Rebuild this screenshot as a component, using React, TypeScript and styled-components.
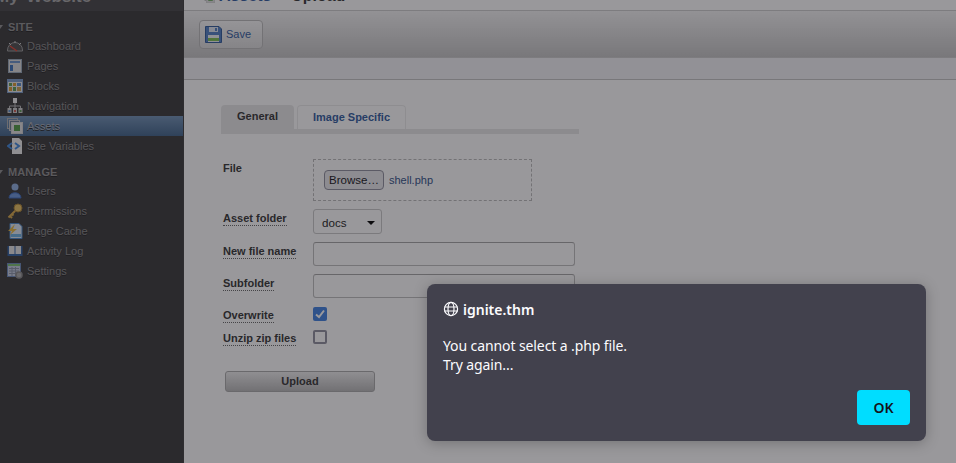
import React from "react"
import styled, { createGlobalStyle } from "styled-components"

const GlobalStyle = createGlobalStyle`
  html, body {
    margin: 0;
    height: 100%;
    overflow: hidden;
    background: #fff;
    font-family: "Liberation Sans", Arial, sans-serif;
  }
  * { box-sizing: border-box; }
`

const DashboardIcon = () => (
  <svg width="16" height="16" viewBox="0 0 16 16">
    <path d="M0.5 12 A7.5 7.5 0 0 1 15.5 12 L15.5 13 L0.5 13 Z" fill="#4c4c4c" stroke="#999" />
    <path d="M2 5 L4 7 M8 3 V5 M14 5 L12 7" stroke="#ccc" />
    <path d="M3 8 L10 13" stroke="#e04030" strokeWidth="1.4" />
  </svg>
)
const PagesIcon = () => (
  <svg width="16" height="16" viewBox="0 0 16 16">
    <rect x="1.5" y="1.5" width="13" height="13" fill="#ddd" stroke="#9ab" />
    <rect x="3" y="3" width="10" height="2" fill="#6a92c8" />
    <rect x="3" y="7" width="3" height="6" fill="#3a6fb8" />
  </svg>
)
const BlocksIcon = () => (
  <svg width="16" height="16" viewBox="0 0 16 16">
    <rect x="0.5" y="1.5" width="15" height="13" fill="#e8e8e8" stroke="#7a9cc8" />
    <rect x="1" y="2" width="14" height="2" fill="#7a9cc8" />
    <rect x="2" y="5" width="3" height="3" fill="#5a9a50" />
    <rect x="6" y="5" width="3" height="3" fill="#d89a30" />
    <rect x="10" y="5" width="4" height="3" fill="#5a8ac8" />
    <rect x="2" y="9" width="3" height="4" fill="#d89a30" />
    <rect x="6" y="9" width="3" height="4" fill="#5a9a50" />
    <rect x="10" y="9" width="4" height="4" fill="#c8a050" />
  </svg>
)
const NavigationIcon = () => (
  <svg width="16" height="16" viewBox="0 0 16 16">
    <rect x="6" y="0" width="4" height="5" fill="#eee" />
    <path d="M8 5 V8 M2.5 10 V8 H13.5 V10 M8 8 V10" stroke="#bbb" fill="none" />
    <rect x="0.5" y="10" width="4" height="5" fill="#ccc" />
    <rect x="6" y="10" width="4" height="5" fill="#ccc" />
    <rect x="11.5" y="10" width="4" height="5" fill="#ccc" />
    <rect x="1.5" y="12" width="2" height="2" fill="#5a8ac8" />
    <rect x="7" y="12" width="2" height="2" fill="#c85a50" />
    <rect x="12.5" y="12" width="2" height="2" fill="#5a9a50" />
  </svg>
)
const AssetsIcon = ({ size = 16 }: { size?: number }) => (
  <svg width={size} height={size} viewBox="0 0 16 16">
    <rect x="0.5" y="0.5" width="10" height="10" fill="none" stroke="#b0b0b0" />
    <rect x="2.5" y="2.5" width="10" height="10" fill="#6a7a8a" stroke="#c0c0c0" />
    <rect x="4.5" y="4.5" width="11" height="11" fill="#e0e0e0" stroke="#d0d0d0" />
    <rect x="7" y="7" width="6" height="6" fill="#4f9a40" />
  </svg>
)
const VariablesIcon = () => (
  <svg width="16" height="16" viewBox="0 0 16 16">
    <path d="M5 0 H12 L15 3 V16 H5 Z" fill="#eee" />
    <path d="M5 5 L1 8 L5 11 M8 5 L12 8 L8 11" stroke="#3f88dd" strokeWidth="2" fill="none" />
  </svg>
)
const UsersIcon = () => (
  <svg width="16" height="16" viewBox="0 0 16 16">
    <circle cx="8" cy="4" r="3.5" fill="#8fb0e0" />
    <path d="M2 15 C2 8 14 8 14 15 Z" fill="#6a94d8" stroke="#3a68b8" />
  </svg>
)
const KeyIcon = () => (
  <svg width="16" height="16" viewBox="0 0 16 16">
    <circle cx="11" cy="5" r="4" fill="#e8c060" stroke="#a88030" />
    <path d="M8 8 L1.5 14.5 M3 13 L5 15 M5 11 L6.5 12.5" stroke="#d8a848" strokeWidth="2" fill="none" />
  </svg>
)
const CacheIcon = () => (
  <svg width="16" height="16" viewBox="0 0 16 16">
    <path d="M3 0.5 H12 L15 3.5 V15.5 H3 Z" fill="#dde8f4" stroke="#4a88c8" />
    <rect x="4" y="11" width="10" height="3" fill="#6ab0e0" />
    <path d="M8 1 L1 8 H5 L3 12 L10 6 H6 Z" fill="#e8b840" />
  </svg>
)
const LogIcon = () => (
  <svg width="16" height="16" viewBox="0 0 16 16">
    <path d="M0.5 3 H7.5 L8 4 L8.5 3 H15.5 V13 H0.5 Z" fill="#2f5f9f" />
    <rect x="2" y="3" width="5.5" height="8" fill="#e4e4e4" />
    <rect x="8.5" y="3" width="5.5" height="8" fill="#e4e4e4" />
  </svg>
)
const SettingsIcon = () => (
  <svg width="16" height="16" viewBox="0 0 16 16">
    <rect x="0.5" y="0.5" width="13" height="13" fill="#c4cce0" stroke="#6a88b8" />
    <rect x="1" y="1" width="12" height="2" fill="#7ac070" />
    <path d="M2 5.5 H12 M2 8 H12 M2 10.5 H12 M5 4 V13 M8.5 4 V13" stroke="#8a94a8" />
    <circle cx="12" cy="12" r="3" fill="#aaa" stroke="#888" strokeWidth="1.5" />
  </svg>
)

const siteItems = [
  { label: "Dashboard", icon: <DashboardIcon /> },
  { label: "Pages", icon: <PagesIcon /> },
  { label: "Blocks", icon: <BlocksIcon /> },
  { label: "Navigation", icon: <NavigationIcon /> },
  { label: "Assets", icon: <AssetsIcon />, active: true },
  { label: "Site Variables", icon: <VariablesIcon /> },
]

const manageItems = [
  { label: "Users", icon: <UsersIcon /> },
  { label: "Permissions", icon: <KeyIcon /> },
  { label: "Page Cache", icon: <CacheIcon /> },
  { label: "Activity Log", icon: <LogIcon /> },
  { label: "Settings", icon: <SettingsIcon /> },
]

export default function App() {
  return (
    <>
      <GlobalStyle />
      <S.Page>
        <S.Sidebar>
          <S.Brand>
            <S.BrandText>My Website</S.BrandText>
          </S.Brand>
          <S.SectionTitle>SITE</S.SectionTitle>
          {siteItems.map((item) => (
            <S.NavRow key={item.label} $active={item.active}>
              <S.NavIcon>{item.icon}</S.NavIcon>
              {item.label}
            </S.NavRow>
          ))}
          <S.SectionTitle>MANAGE</S.SectionTitle>
          {manageItems.map((item) => (
            <S.NavRow key={item.label}>
              <S.NavIcon>{item.icon}</S.NavIcon>
              {item.label}
            </S.NavRow>
          ))}
        </S.Sidebar>

        <S.Main>
          <S.TitleBar>
            <S.TitleIcon>
              <AssetsIcon size={12} />
            </S.TitleIcon>
            <S.TitleText>
              <S.Crumb>Assets</S.Crumb>
              <S.Sep>›</S.Sep>
              Upload
            </S.TitleText>
          </S.TitleBar>
          <S.Toolbar>
            <S.SaveButton>
              <svg width="17" height="17" viewBox="0 0 17 17">
                <path d="M0.5 0.5 H14 L16.5 3 V16.5 H0.5 Z" fill="#4f7fc4" stroke="#2f5a9a" />
                <rect x="4" y="1" width="9" height="5" fill="#dfe6f0" />
                <rect x="10" y="2" width="2" height="3" fill="#4f7fc4" />
                <rect x="3" y="9" width="11" height="7" fill="#eef2f6" />
                <rect x="3" y="12" width="11" height="3" fill="#7cc050" />
              </svg>
              Save
            </S.SaveButton>
          </S.Toolbar>
          <S.Strip />

          <S.Content>
            <S.Tabs>
              <S.Tab $active>General</S.Tab>
              <S.Tab>Image Specific</S.Tab>
            </S.Tabs>
            <S.TabRule />

            <S.FileRow>
              <S.LabelCell $top={3}>
                <S.PlainLabel>File</S.PlainLabel>
              </S.LabelCell>
              <S.DropZone>
                <S.BrowseButton>Browse…</S.BrowseButton>
                <S.FileName>shell.php</S.FileName>
              </S.DropZone>
            </S.FileRow>

            <S.Row $height={25} $gap={8}>
              <S.LabelCell $top={3}>
                <S.HintLabel>Asset folder</S.HintLabel>
              </S.LabelCell>
              <S.Select>
                docs
                <S.Caret />
              </S.Select>
            </S.Row>

            <S.Row $height={24} $gap={8}>
              <S.LabelCell $top={3}>
                <S.HintLabel>New file name</S.HintLabel>
              </S.LabelCell>
              <S.TextInput />
            </S.Row>

            <S.Row $height={24} $gap={8}>
              <S.LabelCell $top={3}>
                <S.HintLabel>Subfolder</S.HintLabel>
              </S.LabelCell>
              <S.TextInput />
            </S.Row>

            <S.Row $height={14} $gap={9}>
              <S.LabelCell $top={2}>
                <S.HintLabel>Overwrite</S.HintLabel>
              </S.LabelCell>
              <S.Check $checked>
                <svg width="14" height="14" viewBox="0 0 14 14">
                  <path d="M3 7.5 L6 10 L11 3.5" stroke="#fff" strokeWidth="2" fill="none" />
                </svg>
              </S.Check>
            </S.Row>

            <S.Row $height={14} $gap={9}>
              <S.LabelCell $top={2}>
                <S.HintLabel>Unzip zip files</S.HintLabel>
              </S.LabelCell>
              <S.Check />
            </S.Row>

            <S.UploadButton>Upload</S.UploadButton>
          </S.Content>
        </S.Main>

        <S.Backdrop />

        <S.Dialog>
          <S.DialogTitle>
            <svg width="16" height="16" viewBox="0 0 16 16" fill="none" stroke="#fbfbfe" strokeWidth="1.2">
              <circle cx="8" cy="8" r="6.6" />
              <ellipse cx="8" cy="8" rx="3" ry="6.6" />
              <path d="M1.4 6 H14.6 M1.4 10 H14.6" />
            </svg>
            ignite.thm
          </S.DialogTitle>
          <S.DialogBody>
            You cannot select a .php file.
            <br />
            Try again...
          </S.DialogBody>
          <S.DialogFooter>
            <S.OkButton>OK</S.OkButton>
          </S.DialogFooter>
        </S.Dialog>
      </S.Page>
    </>
  )
}

const S = {
  Page: styled.div`
    position: relative;
    display: flex;
    width: 956px;
    height: 463px;
    overflow: hidden;
    background: #fff;
  `,
  Sidebar: styled.div`
    flex: none;
    width: 184px;
    height: 100%;
    background: #373738;
    border-right: 1px solid #3c3c3c;
  `,
  Brand: styled.div`
    display: flex;
    align-items: flex-end;
    height: 11px;
    overflow: hidden;
    background: #444446;
  `,
  BrandText: styled.div`
    flex: none;
    margin-left: -5px;
    margin-bottom: 6px;
    font-size: 17px;
    line-height: 17px;
    font-weight: bold;
    word-spacing: 3px;
    color: #a6a6a6;
  `,
  SectionTitle: styled.div`
    position: relative;
    height: 19px;
    margin-top: 6px;
    padding-left: 8px;
    font-size: 11px;
    line-height: 20px;
    font-weight: bold;
    letter-spacing: 0.1px;
    color: #8f8f8f;
    text-shadow: 0 1px 0 #222;
    &::before {
      content: "";
      position: absolute;
      left: -3px;
      top: 8px;
      border-left: 3.5px solid transparent;
      border-right: 3.5px solid transparent;
      border-top: 4px solid #8f8f8f;
    }
  `,
  NavRow: styled.div<{ $active?: boolean }>`
    display: flex;
    align-items: center;
    gap: 4px;
    height: 20px;
    padding-left: 7px;
    font-size: 11px;
    color: ${(p) => (p.$active ? "#a6acb4" : "#868686")};
    text-shadow: 0 1px 0 #222;
    background: ${(p) => (p.$active ? "linear-gradient(#6f90b4, #3f6288)" : "transparent")};
  `,
  NavIcon: styled.span`
    display: flex;
    flex: none;
    width: 16px;
    height: 16px;
  `,
  Main: styled.div`
    flex: 1;
    min-width: 0;
  `,
  TitleBar: styled.div`
    display: flex;
    align-items: flex-end;
    gap: 4px;
    height: 11px;
    overflow: hidden;
    border-bottom: 1px solid #ccc;
    padding-left: 19px;
    background: #fff;
  `,
  TitleIcon: styled.span`
    display: flex;
    flex: none;
    margin-bottom: 7px;
  `,
  TitleText: styled.div`
    flex: none;
    font-size: 16px;
    line-height: 18px;
    margin-bottom: 4px;
    font-weight: bold;
    color: #333;
  `,
  Crumb: styled.span`
    color: #2f5a9e;
  `,
  Sep: styled.span`
    margin: 0 10px 0 6px;
    font-size: 11px;
    font-weight: normal;
    color: #888;
  `,
  Toolbar: styled.div`
    display: flex;
    align-items: center;
    height: 47px;
    padding-left: 15px;
    background: linear-gradient(#f4f4f4, #c4c4c4);
    border-bottom: 1px solid #ccc;
  `,
  SaveButton: styled.div`
    display: flex;
    align-items: center;
    gap: 4px;
    width: 64px;
    height: 29px;
    padding-left: 5px;
    font-size: 11px;
    color: #2f5a9e;
    border: 1px solid #bbb;
    border-radius: 4px;
    background: linear-gradient(#f8f8f8, #dcdcdc);
  `,
  Strip: styled.div`
    height: 22px;
    background: #f2f3f6;
    border-bottom: 1px solid #c4c4c4;
  `,
  Content: styled.div`
    padding: 25px 0 0 37px;
  `,
  Tabs: styled.div`
    display: flex;
    gap: 3px;
    height: 24px;
  `,
  Tab: styled.div<{ $active?: boolean }>`
    padding: 0 ${(p) => (p.$active ? "16px" : "15px")};
    font-size: 11px;
    line-height: 23px;
    font-weight: bold;
    border-radius: 4px 4px 0 0;
    color: ${(p) => (p.$active ? "#333" : "#2f5a9e")};
    background: ${(p) => (p.$active ? "#e8e8e8" : "#fff")};
    border: ${(p) => (p.$active ? "none" : "1px solid #ececec")};
    border-bottom: none;
  `,
  TabRule: styled.div`
    width: 358px;
    height: 5px;
    background: #e8e8e8;
  `,
  FileRow: styled.div`
    display: flex;
    margin-top: 25px;
  `,
  Row: styled.div<{ $height: number; $gap: number }>`
    display: flex;
    align-items: flex-start;
    height: ${(p) => p.$height}px;
    margin-top: ${(p) => p.$gap}px;
  `,
  LabelCell: styled.div<{ $top: number }>`
    display: flex;
    align-items: flex-start;
    flex: none;
    width: 92px;
    padding: ${(p) => p.$top}px 0 0 2px;
  `,
  PlainLabel: styled.span`
    font-size: 11px;
    line-height: 13px;
    font-weight: bold;
    color: #333;
  `,
  HintLabel: styled.span`
    font-size: 11px;
    line-height: 13px;
    font-weight: bold;
    color: #333;
    border-bottom: 1px dotted #666;
  `,
  DropZone: styled.div`
    display: flex;
    align-items: center;
    gap: 5px;
    width: 219px;
    height: 42px;
    padding-left: 10px;
    border: 1px dashed #bbb;
  `,
  BrowseButton: styled.div`
    width: 60px;
    height: 20px;
    font-size: 11.5px;
    line-height: 18px;
    text-align: center;
    color: #15141a;
    background: #e9e9ed;
    border: 1px solid #8f8f9d;
    border-radius: 4px;
  `,
  FileName: styled.div`
    font-size: 11px;
    color: #2f4f86;
  `,
  Select: styled.div`
    position: relative;
    width: 69px;
    height: 25px;
    padding-left: 8px;
    font-size: 11.6px;
    line-height: 26px;
    color: #222;
    background: #fff;
    border: 1px solid #c8c8c8;
    border-radius: 3px;
  `,
  Caret: styled.span`
    position: absolute;
    right: 6px;
    top: 11px;
    border-left: 4px solid transparent;
    border-right: 4px solid transparent;
    border-top: 4px solid #000;
  `,
  TextInput: styled.div`
    width: 262px;
    height: 24px;
    background: #fff;
    border: 1px solid #bdbdbd;
    border-top-color: #a4a4a4;
    border-radius: 3px;
  `,
  Check: styled.div<{ $checked?: boolean }>`
    display: flex;
    width: 14px;
    height: 14px;
    border-radius: 2px;
    background: ${(p) => (p.$checked ? "#3f80e0" : "#fff")};
    border: ${(p) => (p.$checked ? "none" : "2px solid #8f8f9d")};
  `,
  UploadButton: styled.div`
    width: 150px;
    height: 21px;
    margin: 27px 0 0 4px;
    font-size: 11px;
    line-height: 19px;
    font-weight: bold;
    text-align: center;
    color: #333;
    background: linear-gradient(#eee, #b8b8b8);
    border: 1px solid #aaa;
    border-radius: 3px;
  `,
  Backdrop: styled.div`
    position: absolute;
    inset: 0;
    background: rgba(28, 27, 34, 0.45);
  `,
  Dialog: styled.div`
    position: absolute;
    left: 427px;
    top: 284px;
    display: flex;
    flex-direction: column;
    width: 499px;
    height: 157px;
    padding: 16px;
    font-family: "Noto Sans", sans-serif;
    font-size: 14px;
    letter-spacing: -0.1px;
    color: #fbfbfe;
    background: #42414d;
    border-radius: 8px;
    box-shadow: 0 2px 14px rgba(0, 0, 0, 0.25);
  `,
  DialogTitle: styled.div`
    display: flex;
    align-items: center;
    gap: 4px;
    height: 18px;
    font-weight: 600;
    letter-spacing: 0;
  `,
  DialogBody: styled.div`
    margin-top: 18px;
    line-height: 19px;
  `,
  DialogFooter: styled.div`
    display: flex;
    justify-content: flex-end;
    margin-top: auto;
  `,
  OkButton: styled.div`
    width: 53px;
    height: 35px;
    font-size: 14px;
    font-weight: 600;
    line-height: 35px;
    text-align: center;
    color: #15141a;
    background: #00ddff;
    border-radius: 4px;
  `,
}
